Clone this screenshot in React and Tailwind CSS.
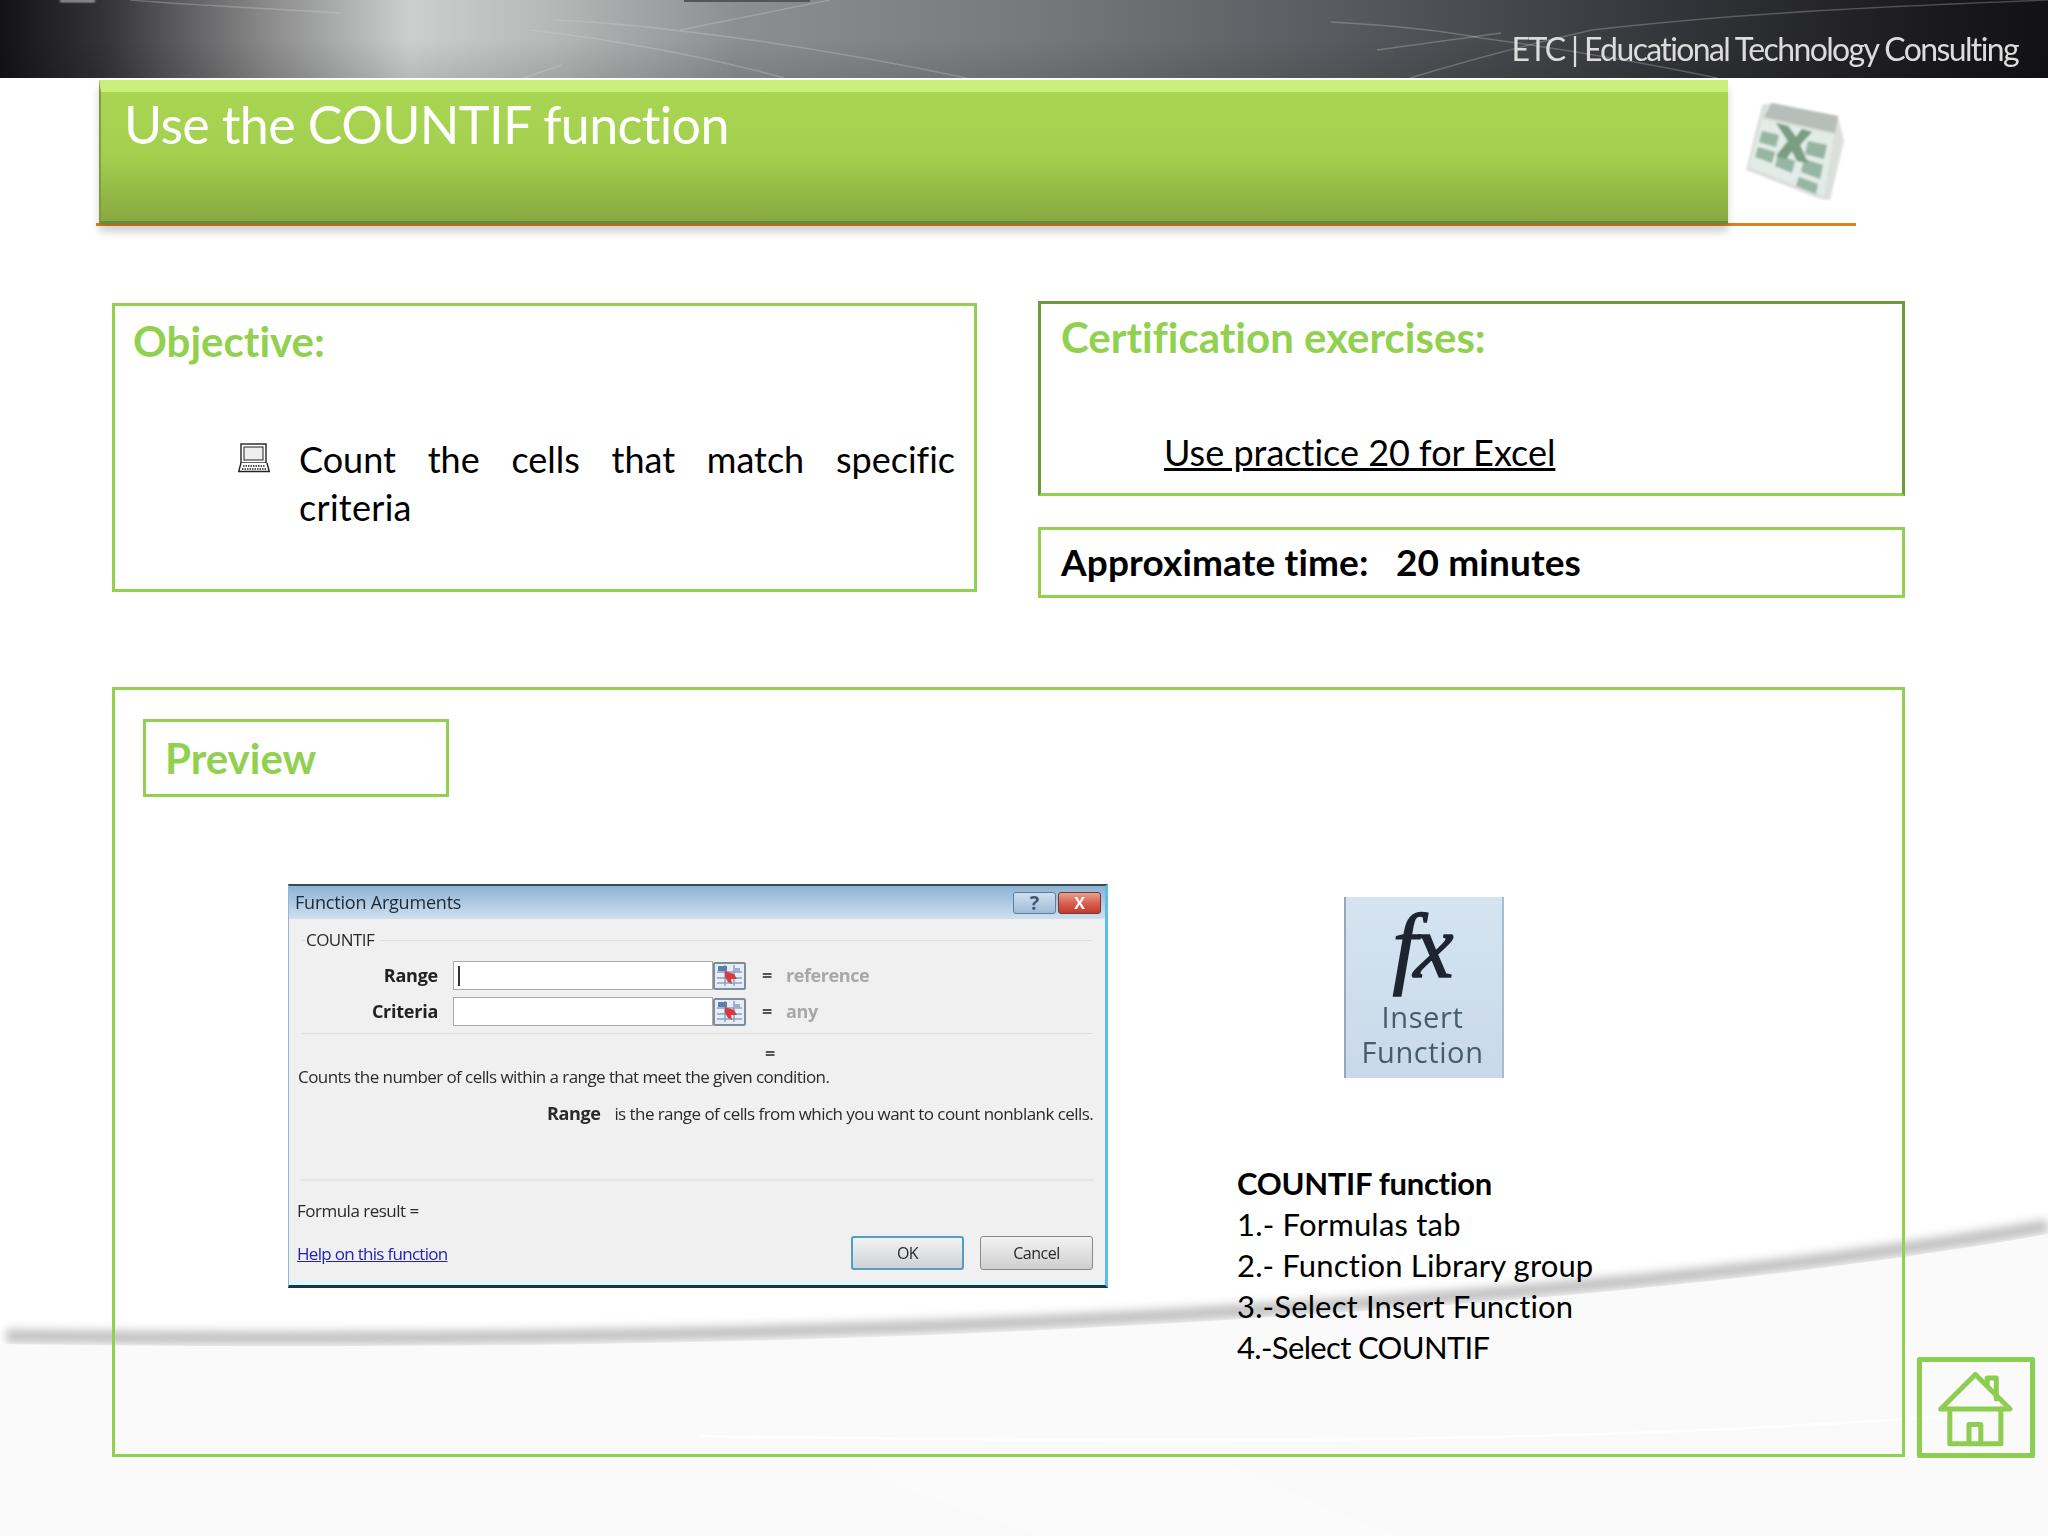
const Laptop = () => (
  <svg width="32" height="30" viewBox="0 0 32 30" fill="none" stroke="#222" strokeWidth="1.4" className="shrink-0 mt-[8px]">
    <rect x="3" y="1" width="25" height="19" fill="#fff" />
    <rect x="6" y="4" width="19" height="13" fill="#eee" strokeWidth="1" />
    <path d="M3 20 L0.7 28.5 H31.3 L29 20" fill="#fff" />
    <path d="M5 23 H27 M4 26 H28" strokeDasharray="1.5 1" strokeWidth="1.6" />
  </svg>
);

const RefButton = () => (
  <div className="w-[33px] h-[28px] border-[2px] border-[#7f8c9a] rounded-[2px] bg-[#e4ebf2] flex items-center justify-center shrink-0">
    <svg width="25" height="21" viewBox="0 0 25 21">
      <rect x="0" y="0" width="25" height="21" fill="#e8eef5" />
      <path d="M0 7 H25 M0 13 H25 M0 18 H25 M8 0 V21 M17 0 V21" stroke="#8ba2c4" strokeWidth="1.5" />
      <rect x="1" y="1" width="9" height="5" fill="#5d7db0" />
      <path d="M17 3 H23 V7 H17 Z" fill="#9aaed0" />
      <path d="M8 6 L17 9 L20 14 L14 14 L15 19 L11 17 L8 12 Z" fill="#d83a3e" />
    </svg>
  </div>
);

const ArgRow = ({ label, value, caret, gap }) => (
  <div className={`flex items-center h-[29px] ${gap}`}>
    <div className="w-[136px] text-right text-[18px] font-bold text-[#222] tracking-[-0.25px]">{label}</div>
    <div className="ml-[15px] w-[260px] h-[29px] bg-white border border-[#a9a9a9] flex items-center pl-[4px]">
      {caret && <div className="w-[1.5px] h-[20px] bg-[#333]" />}
    </div>
    <RefButton />
    <div className="ml-[16px] text-[18px] font-bold text-[#555] w-[24px]">=</div>
    <div className="text-[18px] text-[#a8a8a8] font-bold tracking-[-0.4px]">{value}</div>
  </div>
);

const Dialog = () => (
  <div className="w-[820px] h-[404px] bg-[#f0f0f0] border-t-[2px] border-t-[#3a4a55] border-b-[3px] border-b-[#14384a] border-l border-l-[#8fb8d8] border-r-[3px] border-r-[#5cc0e6] flex flex-col font-['Open_Sans',sans-serif] text-[#2a2a2a] blur-[0.35px] shrink-0 shadow-[inset_0_-5px_0_#e4f6fd]">
    <div className="h-[33px] bg-gradient-to-b from-[#8fb3d3] to-[#cfe0ef] flex items-center justify-between pl-[6px] pr-[4px]">
      <span className="text-[18px] tracking-[-0.2px] text-[#1c2a38]">Function Arguments</span>
      <div className="flex gap-[2px]">
        <div className="w-[43px] h-[22px] rounded-[3px] border border-[#5e7f9f] bg-gradient-to-b from-[#cfe0ef] to-[#9fbcd6] flex items-center justify-center text-[20px] font-bold leading-none text-[#3f5a72]">?</div>
        <div className="w-[43px] h-[22px] rounded-[3px] border border-[#6e3a36] bg-gradient-to-b from-[#e8a090] via-[#d9604f] to-[#c1392b] flex items-center justify-center text-[16px] font-bold leading-none text-white">X</div>
      </div>
    </div>
    <div className="mx-[13px] mt-[21px] h-[94px] border-t border-b border-[#dcdcdc] relative pt-[20px]">
      <span className="absolute left-[4px] top-[-12px] bg-[#f0f0f0] pr-[6px] text-[17px] tracking-[-0.55px] leading-[22px]">COUNTIF</span>
      <ArgRow label="Range" value="reference" caret gap="" />
      <ArgRow label="Criteria" value="any" gap="mt-[7px]" />
    </div>
    <div className="ml-[476px] mt-[8px] h-[22px] text-[18px] font-bold text-[#555] leading-[22px]">=</div>
    <div className="ml-[9px] mt-[2px] text-[17px] leading-[22px] tracking-[-0.57px]">Counts the number of cells within a range that meet the given condition.</div>
    <div className="ml-[258px] mt-[14px] text-[17px] leading-[22px] tracking-[-0.56px] whitespace-nowrap">
      <span className="font-bold text-[18px] tracking-[-0.4px] mr-[14px]">Range</span>is the range of cells from which you want to count nonblank cells.
    </div>
    <div className="mx-[11px] mt-[54px] h-[2px] bg-[#e6e6e6]" />
    <div className="ml-[8px] mt-[19px] text-[17px] leading-[22px] tracking-[-0.5px]">Formula result =</div>
    <div className="flex justify-between items-start pl-[8px] pr-[12px] mt-[14px]">
      <span className="text-[17px] leading-[22px] tracking-[-0.7px] mt-[7px] text-[#2222bb] underline">Help on this function</span>
      <div className="flex gap-[16px]">
        <div className="w-[113px] h-[34px] rounded-[3px] border-[2px] border-[#4f9fc5] bg-gradient-to-b from-[#f2f2f2] to-[#cfd3d6] flex items-center justify-center text-[16px] tracking-[-0.5px]">OK</div>
        <div className="w-[113px] h-[34px] rounded-[3px] border border-[#8a8a8a] bg-gradient-to-b from-[#f2f2f2] to-[#cfcfcf] flex items-center justify-center text-[16px] tracking-[-0.5px]">Cancel</div>
      </div>
    </div>
  </div>
);

const ExcelIcon = () => (
  <svg width="110" height="110" viewBox="0 0 110 110" className="blur-[1.3px] mt-[19px] ml-[14px] opacity-85">
    <path d="M20 6 L30 4 L96 17 L102 42 L88 101 L78 100 L4 71 Z" fill="#d5dad7" />
    <path d="M30 4 L96 17 L93 34 L22 18 Z" fill="#aab3ae" />
    <path d="M20 20 L92 36 L82 97 L7 68 Z" fill="#dfe8e2" />
    <g fill="#86a994">
      <path d="M20 32 L37 36 L34 48 L17 43 Z" />
      <path d="M16 48 L33 53 L30 64 L13 58 Z" />
      <path d="M36 56 L53 62 L50 74 L33 67 Z" />
      <path d="M66 42 L85 46 L82 60 L63 55 Z" />
      <path d="M62 60 L81 66 L78 80 L59 73 Z" />
      <path d="M57 78 L76 85 L74 95 L54 87 Z" />
    </g>
    <path d="M34 24 L46 27 L54 38 L60 30 L70 33 L58 46 L66 64 L55 62 L50 52 L44 60 L34 57 L46 42 Z" fill="#648b70" />
  </svg>
);

const HomeIcon = () => (
  <div className="w-[118px] h-[101px] border-[5px] border-[#8dce52] rounded-[2px] flex items-center justify-center pt-[5px] pl-[6px]">
    <svg width="82" height="78" viewBox="0 0 90 84" fill="none" stroke="#8dce52" strokeWidth="5.5" strokeLinejoin="round" strokeLinecap="round">
      <path d="M3 41 L41 3 L79 41 Z" />
      <path d="M54 14 V7 H64 V30" />
      <path d="M13 41 V79 H69 V41" />
      <path d="M34 79 V58 H47 V79" />
    </svg>
  </div>
);

export default function App() {
  return (
    <div className="relative w-[2048px] h-[1536px] overflow-hidden bg-white font-['Lato','Liberation_Sans',sans-serif] [font-variant-ligatures:none]">
      <svg className="absolute inset-0" width="2048" height="1536" viewBox="0 0 2048 1536">
        <defs>
          <filter id="soft" x="-5%" y="-50%" width="110%" height="200%">
            <feGaussianBlur stdDeviation="5" />
          </filter>
        </defs>
        <path d="M6 1336 C500 1343 900 1332 1240 1311 C1450 1298 1750 1278 2048 1226" stroke="#c0c0c0" strokeWidth="13" fill="none" filter="url(#soft)" />
        <path d="M0 1344 C500 1351 900 1341 1240 1319 C1450 1306 1750 1286 2048 1234 V1536 H0 Z" fill="#fafafa" />
        <path d="M700 1436 C1000 1440 1500 1450 1960 1415" stroke="#ffffff" strokeWidth="3" fill="none" opacity="0.7" />
        <path d="M860 1466 C920 1500 1000 1520 1040 1536 H1400 C1300 1500 1250 1470 1230 1466 Z" fill="#fdfdfd" opacity="0.4" />
      </svg>

      <header className="relative h-[78px] bg-[linear-gradient(90deg,#131316_0%,#333336_5%,#8a8a8b_13%,#cdcfce_20%,#b4b8b6_27%,#8d8e91_36%,#78797d_50%,#5a5b60_65%,#333439_82%,#19191c_95%,#121214_100%)] flex items-center justify-end pr-[30px] pt-[20px]">
        <div className="absolute inset-0 bg-gradient-to-b from-transparent via-transparent to-black/10" />
        <svg className="absolute inset-0" width="2048" height="78" viewBox="0 0 2048 78" fill="none" stroke="#d8d8d8" strokeOpacity="0.28" strokeWidth="1.5">
          <path d="M130 0 C200 6 270 8 340 13" />
          <path d="M555 20 C600 22 640 26 673 30 C780 42 880 60 967 78" />
          <path d="M530 30 C620 40 720 60 784 78" />
          <path d="M680 30 L830 0" />
          <path d="M523 78 L562 65" />
          <path d="M1331 22 C1400 26 1450 32 1481 38 C1570 50 1650 64 1717 78" />
          <path d="M1410 78 C1470 60 1530 44 1592 30 C1750 12 1900 6 2048 0" />
          <path d="M1377 50 L1501 33" />
        </svg>
        <div className="absolute left-[60px] top-0 w-[35px] h-[2px] bg-white/70 blur-[1px]" />
        <div className="absolute left-[684px] top-0 w-[126px] h-[2px] bg-[#555]" />
        <span className="relative text-[32px] text-[#dcdcdc] tracking-[-1.62px] blur-[0.4px] leading-none">ETC | Educational Technology Consulting</span>
      </header>

      <div className="relative ml-[96px] mt-[2px] w-[1760px] h-[146px] border-b-[3px] border-[#e0811f] flex">
        <div className="ml-[3px] w-[1629px] h-[144px] bg-gradient-to-b from-[#a9d651] via-[#a3cf4f] to-[#88a93f] border-t-[12px] border-t-[#c9f07a] border-l-[2px] border-l-[#7f9d3c] border-b-[3px] border-b-[#6b8a36] shadow-[0_8px_8px_rgba(0,0,0,0.18)] pl-[23px]">
          <h1 className="text-[52px] leading-[64px] text-white font-normal tracking-[-0.62px] whitespace-nowrap">Use the COUNTIF function</h1>
        </div>
        <ExcelIcon />
      </div>

      <div className="relative flex ml-[112px] mt-[77px] items-start">
        <section className="w-[865px] h-[289px] border-[3px] border-[#92d050] pl-[18px] pr-[19px]">
          <h2 className="text-[42px] leading-[50px] font-bold text-[#92d050] mt-[10px]">Objective:</h2>
          <div className="flex mt-[69px] ml-[105px]">
            <Laptop />
            <p className="ml-[29px] flex-1 text-[36px] leading-[48px] text-black">
              <span className="block text-justify [text-align-last:justify]">Count the cells that match specific</span>
              <span className="block tracking-[0.3px]">criteria</span>
            </p>
          </div>
        </section>
        <div className="ml-[61px] w-[867px] -mt-[2px]">
          <section className="h-[195px] border-[3px] border-[#92d050] border-t-[#6d9a3e] border-l-[#6d9a3e] border-r-[#6d9a3e] pl-[20px]">
            <h2 className="text-[42px] leading-[50px] font-bold text-[#92d050] mt-[8px]">Certification exercises:</h2>
            <p className="mt-[66px] ml-[103px] text-[36px] leading-[48px] text-black underline">Use practice 20 for Excel</p>
          </section>
          <section className="mt-[31px] h-[71px] border-[3px] border-[#92d050] pl-[20px] flex items-center pb-[2px]">
            <p className="text-[37px] font-bold text-black whitespace-pre tracking-[0.13px]">Approximate time:   20 minutes</p>
          </section>
        </div>
      </div>

      <div className="relative flex ml-[112px] mt-[89px] items-start">
        <section className="w-[1793px] h-[770px] border-[3px] border-[#92d050] pl-[28px] pt-[29px]">
          <div className="w-[306px] h-[78px] border-[3px] border-[#92d050] pl-[19px] flex items-center">
            <h2 className="text-[42px] font-bold text-[#92d050]">Preview</h2>
          </div>
          <div className="flex ml-[145px] mt-[87px]">
            <Dialog />
            <div className="ml-[129px]">
              <div className="ml-[107px] mt-[13px] w-[160px] h-[181px] bg-gradient-to-b from-[#d6e4f1] to-[#c8d9ea] border-l-[2px] border-l-[#98a8b8] border-r-[2px] border-r-[#a8bcd0] flex flex-col items-center blur-[0.6px]">
                <div className="font-['Liberation_Serif',serif] italic text-[90px] leading-[88px] h-[96px] text-[#1c2530] mt-[6px] mr-[6px] tracking-[-4px] [-webkit-text-stroke:1.5px_#1c2530]">fx</div>
                <div className="text-[29px] leading-[35px] text-[#465a70] text-center font-['Open_Sans',sans-serif] tracking-[0.6px] mr-[3px]">Insert<br />Function</div>
              </div>
              <div className="mt-[85px] text-[31px] leading-[41px] text-black whitespace-nowrap">
                <div className="font-bold tracking-[-0.3px]">COUNTIF function</div>
                <div className="tracking-[0.2px]">1.- Formulas tab</div>
                <div className="tracking-[0.15px]">2.- Function Library group</div>
                <div className="tracking-[0.15px]">3.-Select Insert Function</div>
                <div className="tracking-[-0.65px]">4.-Select COUNTIF</div>
              </div>
            </div>
          </div>
        </section>
        <div className="ml-[12px] mt-[670px]">
          <HomeIcon />
        </div>
      </div>
    </div>
  );
}
